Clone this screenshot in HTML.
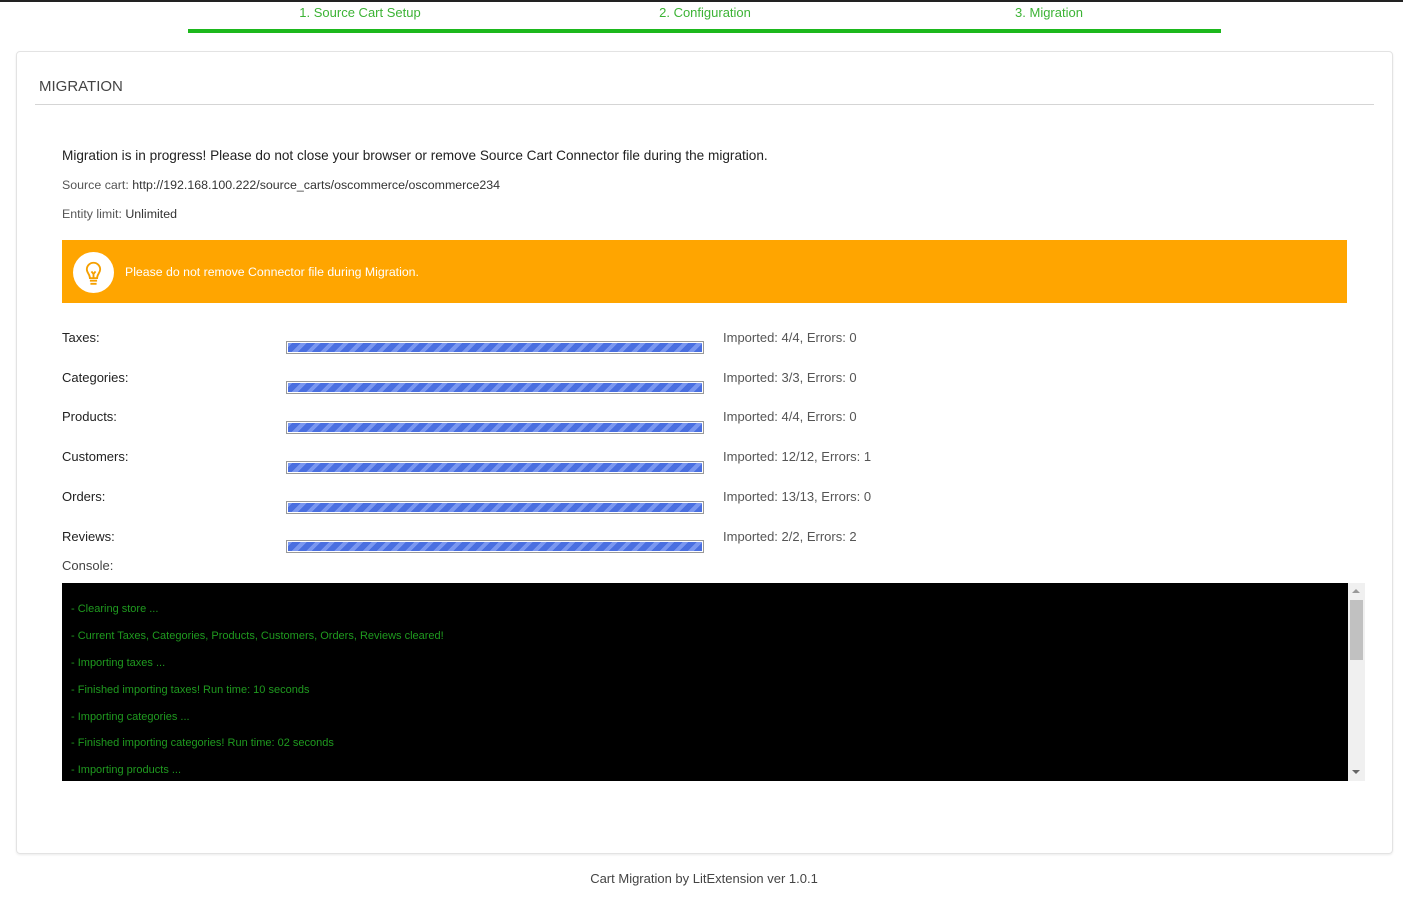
<!DOCTYPE html>
<html><head><meta charset="utf-8"><style>
*{box-sizing:border-box;margin:0;padding:0}
body{width:1403px;height:904px;background:#fff;font-family:"Liberation Sans",sans-serif;color:#333;position:relative;overflow:hidden}
.abs{position:absolute}
.topline{left:0;top:0;width:1403px;height:2px;background:#222}
.step{top:5px;font-size:13px;color:#3cb335;text-align:center;width:344px}
.gbar{left:188px;top:29px;width:1033px;height:4px;background:#1db81d}
.panel{left:16px;top:51px;width:1377px;height:803px;border:1px solid #e3e3e3;border-radius:4px;box-shadow:0 1px 2px rgba(0,0,0,.08)}
.title{left:39px;top:78px;font-size:15px;color:#444}
.hr{left:35px;top:104px;width:1339px;height:1px;background:#d5d5d5}
.t{font-size:13.6px;color:#222}
.s{font-size:12.4px;color:#555}
.alert{left:62px;top:240px;width:1285px;height:63px;background:#ffa500}
.circ{left:73px;top:252px;width:41px;height:41px;border-radius:50%;background:#fff}
.lbl{left:62px;font-size:13px;color:#222}
.pb{left:286px;width:418px;height:13px;border:1px solid #999;padding:1px;background:#fff}
.pb div{width:100%;height:100%;background:repeating-linear-gradient(-45deg,#4a6fe0 0 6px,#7a97f0 6px 10px)}
.imp{left:723px;font-size:13px;color:#555}
.console{left:62px;top:583px;width:1286px;height:198px;background:#000}
.cl{left:71px;font-size:11px;color:#1f9a1f}
.sb{left:1348px;top:583px;width:17px;height:198px;background:#f0f0f0}
</style></head><body>
<div class="abs topline"></div>
<div class="abs step" style="left:188px">1. Source Cart Setup</div>
<div class="abs step" style="left:533px">2. Configuration</div>
<div class="abs step" style="left:877px">3. Migration</div>
<div class="abs gbar"></div>
<div class="abs panel"></div>
<div class="abs title">MIGRATION</div>
<div class="abs hr"></div>
<div class="abs t" style="left:62px;top:148px">Migration is in progress! Please do not close your browser or remove Source Cart Connector file during the migration.</div>
<div class="abs s" style="left:62px;top:178px">Source cart: <span style="color:#333">http://192.168.100.222/source_carts/oscommerce/oscommerce234</span></div>
<div class="abs s" style="left:62px;top:207px">Entity limit: <span style="color:#333">Unlimited</span></div>
<div class="abs alert"></div>
<div class="abs circ"><svg width="41" height="41" viewBox="0 0 40 40"><g fill="none" stroke="#f5a000" stroke-width="1.8"><path d="M13.5 17a6.5 6.5 0 1 1 13 0c0 3.5-3 4.5-3 8.5h-7c0-4-3-5-3-8.5z"/><path d="M16.5 28h7M17 31h6M18 19l2 2.5 2-2.5M20 21.5v4"/></g></svg></div>
<div class="abs" style="left:125px;top:265px;font-size:12.3px;color:#fff">Please do not remove Connector file during Migration.</div>

<div class="abs lbl" style="top:330px">Taxes:</div>
<div class="abs pb" style="top:341px"><div></div></div>
<div class="abs imp" style="top:330px">Imported: 4/4, Errors: 0</div>
<div class="abs lbl" style="top:370px">Categories:</div>
<div class="abs pb" style="top:381px"><div></div></div>
<div class="abs imp" style="top:370px">Imported: 3/3, Errors: 0</div>
<div class="abs lbl" style="top:409px">Products:</div>
<div class="abs pb" style="top:421px"><div></div></div>
<div class="abs imp" style="top:409px">Imported: 4/4, Errors: 0</div>
<div class="abs lbl" style="top:449px">Customers:</div>
<div class="abs pb" style="top:461px"><div></div></div>
<div class="abs imp" style="top:449px">Imported: 12/12, Errors: 1</div>
<div class="abs lbl" style="top:489px">Orders:</div>
<div class="abs pb" style="top:501px"><div></div></div>
<div class="abs imp" style="top:489px">Imported: 13/13, Errors: 0</div>
<div class="abs lbl" style="top:529px">Reviews:</div>
<div class="abs pb" style="top:540px"><div></div></div>
<div class="abs imp" style="top:529px">Imported: 2/2, Errors: 2</div>
<div class="abs" style="left:62px;top:558px;font-size:13px;color:#444">Console:</div>

<div class="abs console"></div>
<div class="abs cl" style="top:603px">- Clearing store ...</div>
<div class="abs cl" style="top:630px">- Current Taxes, Categories, Products, Customers, Orders, Reviews cleared!</div>
<div class="abs cl" style="top:657px">- Importing taxes ...</div>
<div class="abs cl" style="top:684px">- Finished importing taxes! Run time: 10 seconds</div>
<div class="abs cl" style="top:711px">- Importing categories ...</div>
<div class="abs cl" style="top:737px">- Finished importing categories! Run time: 02 seconds</div>
<div class="abs cl" style="top:764px">- Importing products ...</div>
<div class="abs sb"></div>
<div class="abs" style="left:1350px;top:600px;width:13px;height:60px;background:#c1c1c1"></div>
<div class="abs" style="left:1352px;top:589px;width:0;height:0;border:4px solid transparent;border-bottom:4px solid #999;border-top:0"></div>
<div class="abs" style="left:1352px;top:770px;width:0;height:0;border:4px solid transparent;border-top:4px solid #666;border-bottom:0"></div>

<div class="abs" style="left:0;width:1403px;top:871px;text-align:center;font-size:13px;color:#444;padding-left:5px">Cart Migration by LitExtension ver 1.0.1</div>
</body></html>
